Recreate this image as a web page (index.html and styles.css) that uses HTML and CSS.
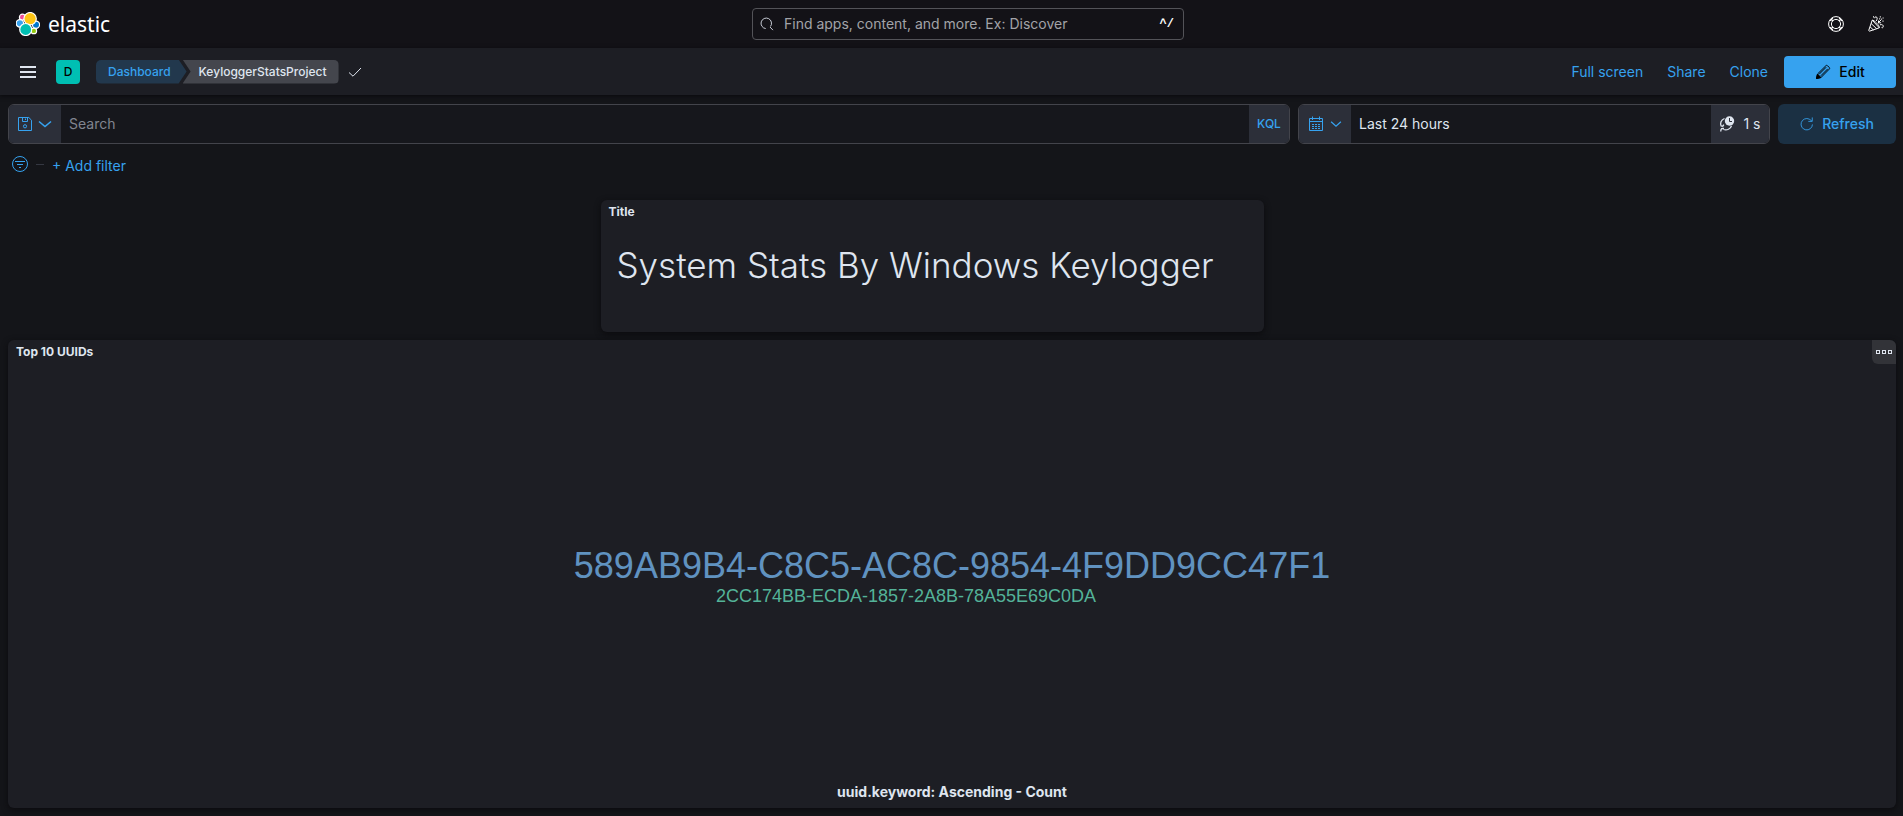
FILE: index.html
```html
<!DOCTYPE html>
<html lang="en">
<head>
<meta charset="utf-8">
<title>KeyloggerStatsProject - Elastic</title>
<link rel="stylesheet" href="styles.css">
</head>
<body>
<header class="top-bar">
  <a class="brand" href="#">
    <svg class="brand-mark" viewBox="0 0 24 24" aria-hidden="true">
      <g stroke="#fff" stroke-width="1.2">
        <circle cx="6.4" cy="5.2" r="3" fill="#f04e98"/>
        <circle cx="3.9" cy="11.4" r="3.7" fill="#36a2ef"/>
        <circle cx="20" cy="12.7" r="3.6" fill="#0077cc"/>
        <circle cx="17.8" cy="18.9" r="2.8" fill="#93c90e"/>
        <circle cx="14.1" cy="6.7" r="6.2" fill="#fec514"/>
        <circle cx="9.7" cy="17.5" r="6" fill="#00bfb3"/>
      </g>
    </svg>
    <span class="brand-name">elastic</span>
  </a>
  <label class="global-search">
    <svg class="icon" viewBox="0 0 16 16" aria-hidden="true"><path d="M6.500 13.200A6 6 0 1 1 12 10.800M11.400 11.400l3.400 3.600"/></svg>
    <input type="search" aria-label="Find apps and content" placeholder="Find apps, content, and more. Ex: Discover">
    <span class="shortcut">^/</span>
  </label>
  <div class="top-actions">
    <button class="icon-button" type="button" aria-label="Help">
      <svg class="icon" viewBox="0 0 16 16"><circle cx="8" cy="8" r="7.4"/><circle cx="8" cy="8" r="4.6"/><path d="M2 4.8 4.8 2M11.2 2 14 4.8M14 11.2 11.2 14M4.8 14 2 11.2M3.4 3.4l1.7 1.7M12.6 3.4l-1.7 1.7M12.6 12.6l-1.7-1.7M3.4 12.6l1.7-1.7" stroke-width="1.2"/></svg>
    </button>
    <button class="icon-button" type="button" aria-label="News">
      <svg class="icon" viewBox="0 0 16 16"><path d="M4.2 4.2.8 14.2c-.2.6.3 1.1.9.9l9.600-3.300zM4.2 4.2C5 3.2 12 9.500 11.300 11.800M3.100 7.500l5.500 5.200M2 10.800l3.500 3.200M6.500 2.200C6.600.5 9 .3 9.200 2.200 9.300 3.500 8.600 4 8.200 5M10.200 6.800l3-3M10.500 7.200V4.500M10.500 6.800h2.600M12 8.800c2-.6 3.600.2 3.200 2-.2.9-1 1.200-1.600.8"/><path d="M11.800.8h1M14.600 2h1M11.200 2.800h1M14.500 5.200h1M5 .9h1M13.300 3.200h.8" stroke-width="1.200"/></svg>
    </button>
  </div>
</header>

<nav class="app-bar" aria-label="Application">
  <button class="menu-button" type="button" aria-label="Menu">
    <svg viewBox="0 0 16 12"><path d="M0 0h16v2H0zM0 5h16v2H0zM0 10h16v2H0z"/></svg>
  </button>
  <button class="space-avatar" type="button" aria-label="Default space">D</button>
  <div class="breadcrumbs">
    <a class="crumb crumb-first" href="#">Dashboard</a>
    <span class="crumb crumb-last">KeyloggerStatsProject</span>
  </div>
  <svg class="icon saved-check" viewBox="0 0 16 16" aria-label="Saved"><path d="M2 8.500l4 3.700L14 4"/></svg>
  <div class="app-actions">
    <a class="text-link" href="#">Full screen</a>
    <a class="text-link" href="#">Share</a>
    <a class="text-link" href="#">Clone</a>
    <button class="edit-button" type="button">
      <svg class="icon" viewBox="0 0 16 16" aria-hidden="true"><path d="M1.500 14.500l1-4.500 8.300-8.200c.6-.6 1.200-.6 1.800 0l1.600 1.600c.6.6.6 1.200 0 1.800L6 13.500zM2.500 10l3.500 3.500M4.200 10.200l7-7M5.800 11.800l7-7"/><path class="solid" d="M1.500 14.500l.9-4 3.100 3.100z"/></svg>
      Edit
    </button>
  </div>
</nav>

<main class="content">
  <form class="query-row">
    <div class="field query-field">
      <button class="field-addon saved-queries" type="button" aria-label="Saved queries">
        <svg class="icon" viewBox="0 0 16 16"><path d="M1.500 1.500h10.300l2.700 2.700v10.300h-13zM5.500 1.500v4h5v-4M8.500 2.500v1.500"/><circle cx="8" cy="10.300" r="1.600"/></svg>
        <svg class="icon bold" viewBox="0 0 16 16"><path d="M2 5.500l6 5 6-5"/></svg>
      </button>
      <input class="query-input" type="text" aria-label="Query" placeholder="Search">
      <button class="field-addon kql" type="button">KQL</button>
    </div>
    <div class="field date-field">
      <button class="field-addon quick-dates" type="button" aria-label="Quick dates">
        <svg class="icon" viewBox="0 0 16 16"><path d="M1.500 2.500h13v12h-13zM1.500 5.500h13M4.500.5v3.500M11.500.5v3.500"/><path d="M4 8.500h2M7 8.500h2M10 8.500h2M4 10.500h2M7 10.500h2M10 10.500h2M4 12.500h2M7 12.500h2M10 12.500h2"/></svg>
        <svg class="icon small" viewBox="0 0 16 16"><path d="M1.500 5l6.500 6 6.500-6"/></svg>
      </button>
      <button class="date-value" type="button">Last 24 hours</button>
      <button class="field-addon interval" type="button">
        <svg class="icon" viewBox="0 0 16 16" aria-hidden="true"><path d="M5.500 2.500C2 4 .8 7 2.200 10.200M2 15.500c-.4-1.500 0-3 1.500-3h1.500M4.500 13.500c3.500 1.200 7-.5 8-3.800M1.800 9.800l2 .4 1-1.600" stroke-width="1.300"/><circle class="solid" cx="10.500" cy="5" r="4.700" stroke="none"/><path d="M10.500 2v3.500h2.500" stroke="#2c2f39"/></svg>
        1 s
      </button>
    </div>
    <button class="refresh-button" type="button">
      <svg class="icon" viewBox="0 0 16 16" aria-hidden="true"><path d="M14.200 8.500A6.500 6.500 0 1 1 10.500 2.400l3 2.100M14 .5v4.500h-4.500"/></svg>
      Refresh
    </button>
  </form>

  <div class="filter-row">
    <button class="filter-button" type="button" aria-label="Filter options">
      <svg class="icon" viewBox="0 0 16 16"><circle cx="8" cy="8" r="7.500"/><path d="M3 5.500h10M5 8.500h6M7 11.500h2"/></svg>
    </button>
    <span class="filter-dash"></span>
    <button class="add-filter" type="button">+ Add filter</button>
  </div>

  <div class="dashboard">
    <section class="panel title-panel">
      <h2 class="panel-title">Title</h2>
      <h1 class="headline">System Stats By Windows Keylogger</h1>
    </section>
    <section class="panel cloud-panel">
      <h2 class="panel-title">Top 10 UUIDs</h2>
      <button class="panel-menu" type="button" aria-label="Panel options">
        <svg class="icon" viewBox="0 0 16 16" shape-rendering="crispEdges"><path d="M.5 6.500h3v3h-3zM6.500 6.500h3v3h-3zM12.500 6.500h3v3h-3z"/></svg>
      </button>
      <div class="cloud">
        <span class="tag tag-large">589AB9B4-C8C5-AC8C-9854-4F9DD9CC47F1</span>
        <span class="tag tag-small">2CC174BB-ECDA-1857-2A8B-78A55E69C0DA</span>
      </div>
      <p class="cloud-label">uuid.keyword: Ascending - Count</p>
    </section>
  </div>
</main>
</body>
</html>
```

FILE: styles.css
```css
* { box-sizing: border-box; }

body {
  margin: 0;
  min-height: 100vh;
  display: flex;
  flex-direction: column;
  background: #141519;
  color: #dfe5ef;
  font: 14px/20px Inter, "Liberation Sans", sans-serif;
}

button, input { font: inherit; color: inherit; border: 0; background: none; padding: 0; margin: 0; }
button { cursor: pointer; }
a { text-decoration: none; }

.icon {
  width: 16px;
  height: 16px;
  flex: none;
  fill: none;
  stroke: currentColor;
  stroke-width: 1;
}
.icon .solid { fill: currentColor; }
.icon.bold { stroke-width: 1.6; }
.icon.small { width: 12px; height: 12px; stroke-width: 1.6; }

.top-bar {
  height: 48px;
  display: flex;
  align-items: center;
  justify-content: space-between;
  background: #131217;
}
.brand {
  width: 120px;
  padding-left: 16px;
  display: flex;
  align-items: center;
  gap: 8px;
  color: #fff;
}
.brand-mark { width: 24px; height: 24px; flex: none; }
.brand-name { font: 21px/24px "Noto Sans", sans-serif; }

.global-search {
  width: 432px;
  height: 32px;
  display: flex;
  align-items: center;
  padding: 0 9px 0 7px;
  gap: 10px;
  border: 1px solid #535358;
  border-radius: 4px;
  color: #dfe5ef;
}
.global-search .icon { width: 14px; height: 14px; }
.global-search input { flex: 1; min-width: 0; outline: 0; }
input::placeholder { color: #a2a3a8; opacity: 1; }
.shortcut { font-family: "Liberation Mono", monospace; font-size: 12px; font-weight: 700; color: #fff; }

.top-actions { display: flex; padding-right: 7px; }
.icon-button {
  width: 40px;
  height: 40px;
  display: grid;
  place-items: center;
  color: #fff;
}

.app-bar {
  height: 47px;
  display: flex;
  align-items: center;
  padding: 0 7px 0 8px;
  background: #1d1e24;
  box-shadow: 0 1px 4px #0a0a0d;
}
.menu-button { width: 40px; height: 40px; display: grid; place-items: center; }
.menu-button svg { width: 16px; height: 12px; fill: #dfe5ef; }
.space-avatar {
  width: 24px;
  height: 24px;
  margin: 0 16px 0 8px;
  border-radius: 4px;
  background: #00bfb3;
  color: #000;
  font-size: 12px;
  font-weight: 500;
}
.breadcrumbs { display: flex; }
.crumb { height: 24px; font-size: 12px; font-weight: 500; line-height: 24px; }
.crumb-first {
  padding: 0 16px 0 12px;
  background: #22384d;
  color: #36a2ef;
  border-radius: 5px 0 0 5px;
  clip-path: polygon(0 0, calc(100% - 8px) 0, 100% 50%, calc(100% - 8px) 100%, 0 100%);
}
.crumb-last {
  margin-left: -4px;
  padding: 0 12px 0 16px;
  background: #44464d;
  border-radius: 0 5px 5px 0;
  clip-path: polygon(0 0, 100% 0, 100% 100%, 0 100%, 8px 50%);
}
.saved-check { margin-left: 8px; }
.app-actions { margin-left: auto; display: flex; align-items: center; gap: 24px; }
.text-link { color: #36a2ef; }
.edit-button {
  width: 112px;
  height: 32px;
  margin-left: -8px;
  display: flex;
  align-items: center;
  justify-content: center;
  gap: 8px;
  border-radius: 4px;
  background: #36a2ef;
  color: #000;
  font-weight: 500;
}

.content { flex: 1; display: flex; flex-direction: column; padding: 9px 7px 8px 8px; }

.query-row { display: flex; gap: 8px; }
.field {
  height: 40px;
  display: flex;
  overflow: hidden;
  border: 1px solid #43444b;
  border-radius: 6px;
  background: #16171c;
}
.query-field { flex: 1; }
.field-addon {
  display: flex;
  align-items: center;
  justify-content: center;
  background: #2c2f39;
  color: #36a2ef;
}
.saved-queries, .quick-dates { width: 52px; }
.saved-queries { gap: 4px; }
.quick-dates { gap: 6px; }
.query-input { flex: 1; min-width: 0; padding: 0 8px; outline: 0; }
.query-input::placeholder { color: #81858f; }
.kql { width: 40px; font-size: 12px; font-weight: 500; }
.date-field { width: 472px; }
.date-value { flex: 1; padding: 0 8px; text-align: left; }
.interval { width: 58px; gap: 8px; color: #dfe5ef; }
.refresh-button {
  width: 118px;
  height: 40px;
  display: flex;
  align-items: center;
  justify-content: center;
  gap: 8px;
  border-radius: 6px;
  background: #1b3043;
  color: #36a2ef;
  font-weight: 500;
}
.refresh-button .icon { width: 14px; height: 14px; }

.filter-row { display: flex; align-items: center; height: 40px; padding: 0 4px; gap: 8px; color: #36a2ef; }
.filter-button { height: 16px; display: flex; }
.filter-dash { width: 8px; height: 1px; background: #343741; }
.add-filter { padding-top: 4px; line-height: 20px; }

.dashboard {
  flex: 1;
  margin-top: 16px;
  display: grid;
  grid-template-columns: repeat(48, minmax(0, 1fr));
  grid-template-rows: 132px 1fr;
  gap: 8px;
}
.panel {
  position: relative;
  display: flex;
  flex-direction: column;
  border-radius: 6px;
  background: #1d1e24;
  box-shadow: 0 2px 6px #0b0b0e;
}
.title-panel { grid-column: 16 / span 17; }
.cloud-panel { grid-column: 1 / -1; }
.panel-title { margin: 0; padding: 0 8px; font-size: 12px; font-weight: 700; line-height: 24px; }
.headline { margin: 16px 16px 0; font-size: 35px; font-weight: 300; line-height: 50px; }
.panel-menu {
  position: absolute;
  top: 0;
  right: 0;
  width: 24px;
  height: 24px;
  display: grid;
  place-items: center;
  border-radius: 0 6px 0 6px;
  background: #323338;
}
.cloud {
  flex: 1;
  display: flex;
  flex-direction: column;
  align-items: center;
  justify-content: center;
  padding-top: 6px;
  font-family: "Liberation Sans", Arial, sans-serif;
}
.tag-large { color: #6092c0; font-size: 36px; line-height: 40px; }
.tag-small { margin-right: 92px; color: #54b399; font-size: 18px; line-height: 20px; }
.cloud-label { margin: 0; padding-bottom: 6px; text-align: center; font-weight: 700; }
```
